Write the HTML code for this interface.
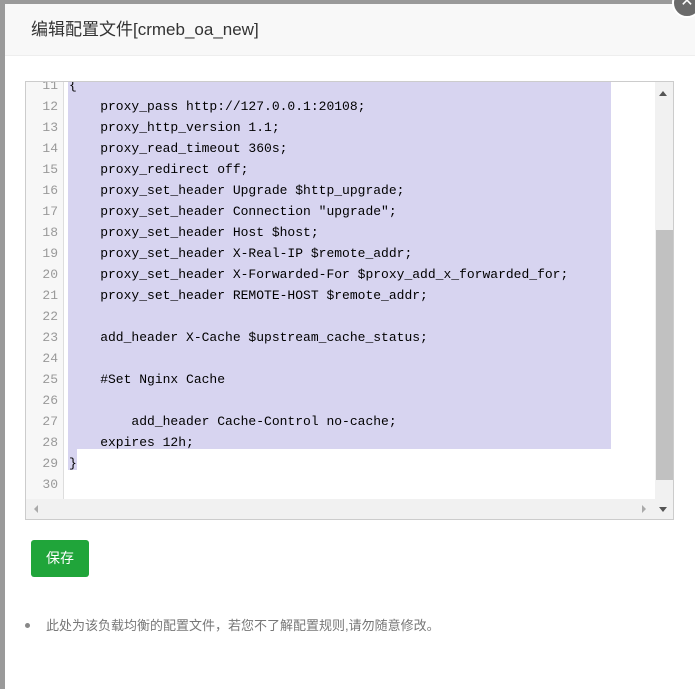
<!DOCTYPE html>
<html><head><meta charset="utf-8"><style>
body{margin:0;width:695px;height:689px;background:#9a9a9a;position:relative;overflow:hidden;font-family:"Liberation Sans","Noto Sans CJK SC",sans-serif}
.dlg{position:absolute;left:5px;top:4px;width:690px;height:685px;background:#fff}
.hd{height:51px;background:#f8f8f8;border-bottom:1px solid #eee;font-size:17px;color:#333;line-height:52px;padding-left:26px}
.close{position:absolute;left:672px;top:-12px;width:26px;height:26px;border-radius:50%;background:#6b6b6b;border:2px solid #fff;color:#fff;font-size:16px;text-align:center;line-height:24px}
.ed{position:absolute;left:20px;top:77px;width:647px;height:437px;border:1px solid #ccc;background:#fff;overflow:hidden}
.gut{position:absolute;left:0;top:0;width:37px;height:417px;background:#f7f7f7;border-right:1px solid #ddd}
.ln{position:absolute;left:0;width:32px;text-align:right;font:13px "Liberation Mono",monospace;color:#999;height:21px;line-height:21px}
.cl{position:absolute;left:43px;font:13px "Liberation Mono",monospace;color:#000;height:21px;line-height:21px;white-space:pre}
.sel{position:absolute;left:42px;top:0;width:543px;height:367px;background:#d7d4f0}
.vs{position:absolute;left:629px;top:0;width:18px;height:417px;background:#f1f1f1}
.th{position:absolute;left:630px;top:148px;width:17px;height:250px;background:#c1c1c1}
.hs{position:absolute;left:0;top:417px;width:647px;height:20px;background:#f1f1f1}
.btn{position:absolute;left:26px;top:536px;width:58px;height:37px;background:#20a53a;border-radius:3px;color:#fff;font-size:14px;line-height:37px;text-align:center}
.note{position:absolute;left:41px;top:611px;font-size:13px;color:#777}
.dot{position:absolute;left:20px;top:619px;width:5px;height:5px;border-radius:50%;background:#888}
</style></head><body>
<div class="dlg">
<div class="hd">编辑配置文件[crmeb_oa_new]</div>
<div class="ed">
<div class="gut"></div>
<div class="sel"></div>
<div style="position:absolute;left:42px;top:367px;width:9px;height:21px;background:#d7d4f0"></div>
<div class="ln" style="top:-7px">11</div><div class="cl" style="top:-7px">{</div>
<div class="ln" style="top:14px">12</div><div class="cl" style="top:14px">    proxy_pass http://127.0.0.1:20108;</div>
<div class="ln" style="top:35px">13</div><div class="cl" style="top:35px">    proxy_http_version 1.1;</div>
<div class="ln" style="top:56px">14</div><div class="cl" style="top:56px">    proxy_read_timeout 360s;</div>
<div class="ln" style="top:77px">15</div><div class="cl" style="top:77px">    proxy_redirect off;</div>
<div class="ln" style="top:98px">16</div><div class="cl" style="top:98px">    proxy_set_header Upgrade $http_upgrade;</div>
<div class="ln" style="top:119px">17</div><div class="cl" style="top:119px">    proxy_set_header Connection "upgrade";</div>
<div class="ln" style="top:140px">18</div><div class="cl" style="top:140px">    proxy_set_header Host $host;</div>
<div class="ln" style="top:161px">19</div><div class="cl" style="top:161px">    proxy_set_header X-Real-IP $remote_addr;</div>
<div class="ln" style="top:182px">20</div><div class="cl" style="top:182px">    proxy_set_header X-Forwarded-For $proxy_add_x_forwarded_for;</div>
<div class="ln" style="top:203px">21</div><div class="cl" style="top:203px">    proxy_set_header REMOTE-HOST $remote_addr;</div>
<div class="ln" style="top:224px">22</div>
<div class="ln" style="top:245px">23</div><div class="cl" style="top:245px">    add_header X-Cache $upstream_cache_status;</div>
<div class="ln" style="top:266px">24</div>
<div class="ln" style="top:287px">25</div><div class="cl" style="top:287px">    #Set Nginx Cache</div>
<div class="ln" style="top:308px">26</div>
<div class="ln" style="top:329px">27</div><div class="cl" style="top:329px">        add_header Cache-Control no-cache;</div>
<div class="ln" style="top:350px">28</div><div class="cl" style="top:350px">    expires 12h;</div>
<div class="ln" style="top:371px">29</div><div class="cl" style="top:371px">}</div>
<div class="ln" style="top:392px">30</div>
<div class="cl" style="top:413px">          /</div>
<div class="vs"></div><div class="th"></div>
<div class="hs"></div>
<div style="position:absolute;left:633px;top:9px;width:0;height:0;border-left:4px solid transparent;border-right:4px solid transparent;border-bottom:5px solid #555"></div>
<div style="position:absolute;left:633px;top:425px;width:0;height:0;border-left:4px solid transparent;border-right:4px solid transparent;border-top:5px solid #555"></div>
<div style="position:absolute;left:8px;top:423px;width:0;height:0;border-top:4px solid transparent;border-bottom:4px solid transparent;border-right:4px solid #aaa"></div>
<div style="position:absolute;left:616px;top:423px;width:0;height:0;border-top:4px solid transparent;border-bottom:4px solid transparent;border-left:4px solid #aaa"></div>
</div>
<div class="btn">保存</div>
<div class="dot"></div>
<div class="note">此处为该负载均衡的配置文件，若您不了解配置规则,请勿随意修改。</div>
</div>
<div class="close">✕</div>
</body></html>
